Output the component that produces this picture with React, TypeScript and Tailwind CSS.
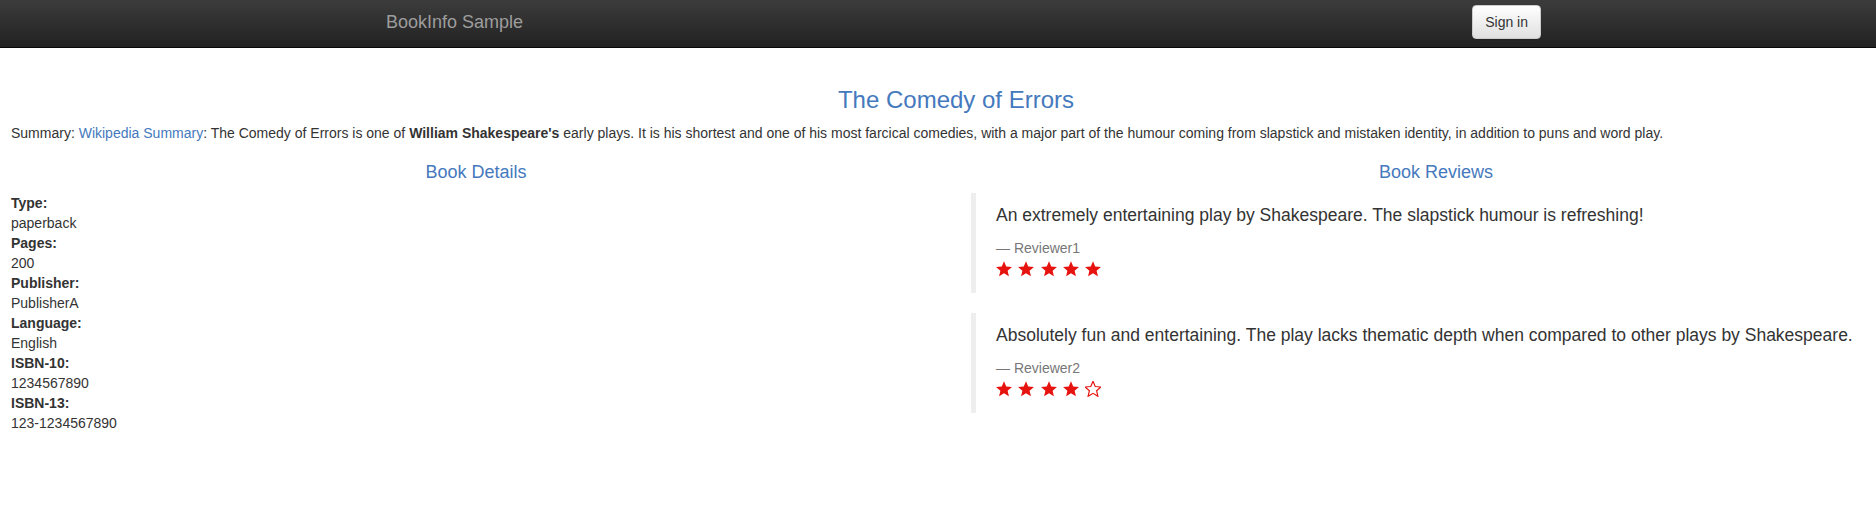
import React from 'react';

const details = [
  ["Type:", "paperback"],
  ["Pages:", "200"],
  ["Publisher:", "PublisherA"],
  ["Language:", "English"],
  ["ISBN-10:", "1234567890"],
  ["ISBN-13:", "123-1234567890"],
];

const reviews = [
  {
    text: "An extremely entertaining play by Shakespeare. The slapstick humour is refreshing!",
    reviewer: "Reviewer1",
    rating: 5,
  },
  {
    text: "Absolutely fun and entertaining. The play lacks thematic depth when compared to other plays by Shakespeare.",
    reviewer: "Reviewer2",
    rating: 4,
  },
];

// fat five-point star, close to the glyphicon one
const STAR = "12,1.1 15.06,8.39 22.94,9.05 16.95,14.21 18.76,21.9 12,17.8 5.24,21.9 7.05,14.21 1.06,9.05 8.94,8.39";

function Star({ filled }: { filled: boolean }) {
  return (
    <svg viewBox="1 1 22 21" className="w-[16px] h-[15.5px]">
      {filled ? (
        <polygon points={STAR} fill="#e6130e" />
      ) : (
        <polygon points={STAR} fill="none" stroke="#e6130e" strokeWidth="1.6" />
      )}
    </svg>
  );
}

export default function App() {
  return (
    <div className="w-[1876px] h-[516px] overflow-hidden bg-white text-[14px] leading-[20px] text-[#333] font-['Liberation_Sans',Arial,sans-serif]">
      {/* navbar */}
      <nav className="h-[48px] border-b border-[#080808] bg-linear-to-b from-[#3c3c3c] to-[#222]">
        <div className="ml-[386px] w-[1155px] flex justify-between items-start">
          <a href="#" className="pt-[12px] text-[18px] leading-[20px] text-[#9d9d9d]">
            BookInfo Sample
          </a>
          <button className="mt-[5px] h-[34px] px-[12px] rounded-[4px] border border-[#ccc] bg-linear-to-b from-white to-[#e0e0e0] text-[14px] leading-[20px] text-[#333] shadow-[inset_0_1px_0_rgba(255,255,255,0.15),0_1px_1px_rgba(0,0,0,0.075)]">
            Sign in
          </button>
        </div>
      </nav>

      <main className="ml-[11px] w-[1890px] pt-[39px]">
        <h3 className="text-[24px] leading-[26.4px] text-center text-[#4579bd] mb-[10px]">
          The Comedy of Errors
        </h3>
        <p className="mb-[10px] whitespace-nowrap">
          Summary: <a href="#" className="text-[#4579bd]">Wikipedia Summary</a>: The Comedy of Errors is one of{" "}
          <b>William Shakespeare's</b> early plays. It is his shortest and one of his most farcical comedies, with a
          major part of the humour coming from slapstick and mistaken identity, in addition to puns and word play.
        </p>

        <div className="grid grid-cols-2 gap-[30px]">
          <div>
            <h4 className="mt-[10px] mb-[10px] text-[18px] leading-[19.8px] text-center text-[#4579bd]">Book Details</h4>
            <dl>
              {details.map(([k, v]) => (
                <React.Fragment key={k}>
                  <dt className="font-bold">{k}</dt>
                  <dd>{v}</dd>
                </React.Fragment>
              ))}
            </dl>
          </div>

          <div>
            <h4 className="mt-[10px] mb-[10px] text-[18px] leading-[19.8px] text-center text-[#4579bd]">Book Reviews</h4>
            {reviews.map((r) => (
              <blockquote key={r.reviewer} className="border-l-[5px] border-[#eee] py-[10px] px-[20px] mb-[20px]">
                <p className="text-[17.5px] leading-[25px] mb-[10px]">{r.text}</p>
                <small className="block text-[14px] leading-[20px] text-[#777]">
                  {"\u2014\u00a0"}
                  {r.reviewer}
                </small>
                <div className="h-[25px] flex items-start gap-[6.3px] pt-[3px]">
                  {[1, 2, 3, 4, 5].map((i) => (
                    <Star key={i} filled={i <= r.rating} />
                  ))}
                </div>
              </blockquote>
            ))}
          </div>
        </div>
      </main>
    </div>
  );
}
